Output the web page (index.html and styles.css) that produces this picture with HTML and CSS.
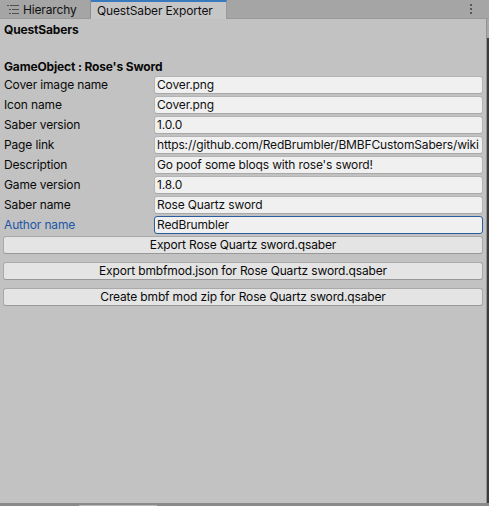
FILE: index.html
```html
<!DOCTYPE html>
<html>
<head>
<meta charset="utf-8">
<link rel="stylesheet" href="styles.css">
</head>
<body>
<div class="window">
  <div class="tabbar">
    <div class="tab">
      <svg class="tab-icon" width="12" height="9" viewBox="0 0 12 9">
        <rect x="0" y="0" width="2" height="1" fill="#505050"/>
        <rect x="3" y="0" width="9" height="1" fill="#505050"/>
        <rect x="2" y="4" width="2" height="1" fill="#505050"/>
        <rect x="5" y="4" width="7" height="1" fill="#505050"/>
        <rect x="2" y="8" width="2" height="1" fill="#505050"/>
        <rect x="5" y="8" width="7" height="1" fill="#505050"/>
      </svg>
      <span>Hierarchy</span>
    </div>
    <div class="tab tab-active"><span>QuestSaber Exporter</span></div>
    <div class="tab-fill"></div>
    <div class="kebab"><i></i><i></i><i></i></div>
  </div>
  <div class="body-row">
    <div class="content">
      <div class="heading">QuestSabers</div>
      <div class="heading heading-obj">GameObject : Rose's Sword</div>
      <div class="fields">
        <div class="label">Cover image name</div><div class="field">Cover.png</div>
        <div class="label">Icon name</div><div class="field">Cover.png</div>
        <div class="label">Saber version</div><div class="field">1.0.0</div>
        <div class="label">Page link</div><div class="field">https://github.com/RedBrumbler/BMBFCustomSabers/wiki</div>
        <div class="label">Description</div><div class="field">Go poof some bloqs with rose's sword!</div>
        <div class="label">Game version</div><div class="field">1.8.0</div>
        <div class="label">Saber name</div><div class="field">Rose Quartz sword</div>
        <div class="label label-focus">Author name</div><div class="field field-focus">RedBrumbler</div>
      </div>
      <div class="btn btn-first">Export Rose Quartz sword.qsaber</div>
      <div class="btn">Export bmbfmod.json for Rose Quartz sword.qsaber</div>
      <div class="btn">Create bmbf mod zip for Rose Quartz sword.qsaber</div>
    </div>
    <div class="edge"></div>
  </div>
  <div class="bottom"><div class="bottom-tab"></div></div>
</div>
</body>
</html>
```
FILE: styles.css
```css
html, body {
  margin: 0;
  padding: 0;
  background: #c2c2c2;
}
body {
  font-family: Inter, "Noto Sans", sans-serif;
  font-size: 12px;
  letter-spacing: -0.15px;
  color: #090909;
  width: 489px;
  height: 506px;
  overflow: hidden;
}
.window {
  display: flex;
  flex-direction: column;
  height: 506px;
}
.tabbar {
  height: 19px;
  flex: none;
  display: flex;
  background: #a5a5a5;
  box-sizing: border-box;
  border-bottom: 1px solid #999999;
}
.tab {
  display: flex;
  align-items: center;
  height: 18px;
  padding: 0 8px 0 7px;
  width: 91px;
  box-sizing: border-box;
  border-right: 1px solid #8e8e8e;
  color: #101010;
  font-size: 12px;
}
.tab-icon {
  margin-right: 4px;
  flex: none;
}
.tab-active {
  width: 136px;
  height: 19px;
  margin-bottom: -1px;
  background: #c6c6c6;
  border-top: 2px solid #3a79bb;
  border-right: 1px solid #9a9a9a;
  padding: 0 0 0 6px;
  box-sizing: border-box;
}
.tab-fill {
  flex: 1;
}
.kebab {
  width: 4px;
  display: flex;
  flex-direction: column;
  gap: 2px;
  padding-top: 4px;
  margin-right: 15px;
}
.kebab i {
  display: block;
  width: 2px;
  height: 2px;
  background: #585858;
}
.body-row {
  flex: 1;
  display: flex;
  min-height: 0;
}
.content {
  flex: 1;
  padding: 2px 3px 0 3px;
  background: #c2c2c2;
}
.edge {
  width: 3px;
  flex: none;
  background: linear-gradient(to bottom, #a9a9a9 0, #a9a9a9 19px, #3c3c3c 19px);
  border-left: 1px solid #939393;
  box-sizing: border-box;
}
.heading {
  font-weight: 700;
  height: 18px;
  line-height: 18px;
  padding-left: 1px;
}
.heading-obj {
  margin-top: 19px;
}
.fields {
  display: grid;
  grid-template-columns: 151px 1fr;
  row-gap: 2px;
}
.label {
  height: 18px;
  line-height: 18px;
  padding-left: 1px;
  white-space: nowrap;
}
.label-focus {
  color: #1c57a6;
}
.field {
  height: 18px;
  line-height: 16px;
  box-sizing: border-box;
  background: #f0f0f0;
  border: 1px solid #b4b4b4;
  border-bottom-color: #a8a8a8;
  border-radius: 3px;
  padding: 0 2px;
  color: #101010;
  white-space: nowrap;
  overflow: hidden;
}
.field-focus {
  border-color: #2b5d9e;
}
.btn {
  height: 18px;
  line-height: 16px;
  box-sizing: border-box;
  background: #e4e4e4;
  border: 1px solid #a9a9a9;
  border-bottom-color: #989898;
  border-radius: 3px;
  text-align: center;
  margin-top: 8px;
  white-space: nowrap;
}
.btn-first {
  margin-top: 2px;
}
.bottom {
  height: 3px;
  flex: none;
  background: #8a8a8a;
  position: relative;
}
.bottom-tab {
  position: absolute;
  left: 79px;
  width: 78px;
  top: 2px;
  height: 1px;
  background: #b8b8b8;
}
```
